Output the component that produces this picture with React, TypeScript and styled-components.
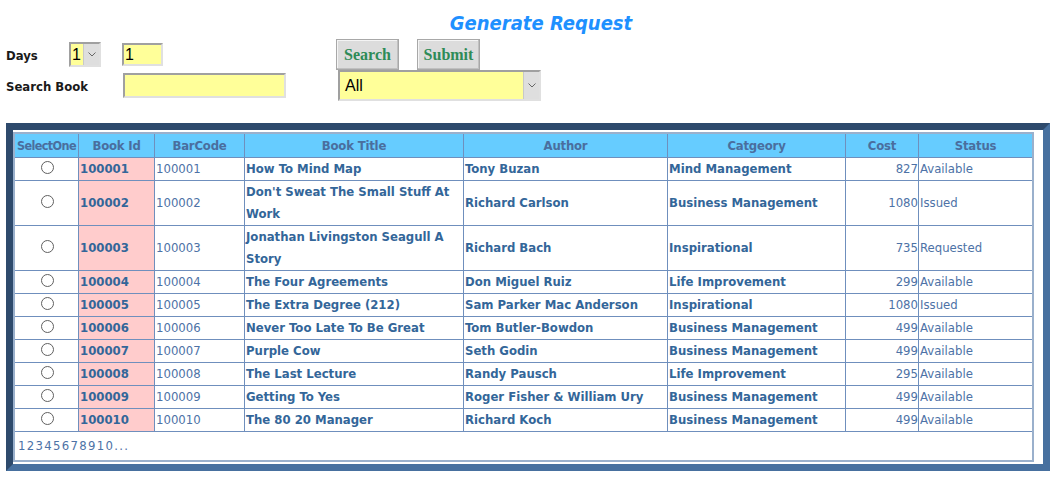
import React from "react";
import styled, { createGlobalStyle } from "styled-components";

const Global = createGlobalStyle`
  html, body { margin: 0; padding: 0; background: #fff; }
  body { font-family: "DejaVu Sans Condensed", "DejaVu Sans", sans-serif; }
`;

const Page = styled.div`
  width: 1053px;
  padding: 8px 3px 0 6px;
  box-sizing: border-box;
`;

const Title = styled.h1`
  margin: 0;
  height: 31px;
  font-size: 20px;
  font-style: italic;
  font-weight: bold;
  color: #1e90ff;
  text-align: center;
  padding-left: 26px;
  line-height: 31px;
`;

const FormRow = styled.div`
  display: flex;
  align-items: center;
  height: 31px;
`;

const Label = styled.div<{ $w: number }>`
  width: ${(p) => p.$w}px;
  font-size: 13px;
  font-weight: bold;
  color: #1a1a1a;
  padding-top: 2px;
`;

const YellowBox = styled.div<{ $w: number; $h: number; $ml?: number }>`
  width: ${(p) => p.$w}px;
  height: ${(p) => p.$h}px;
  margin-left: ${(p) => p.$ml ?? 0}px;
  box-sizing: border-box;
  background: #ffff99;
  border: 2px solid;
  border-color: #a0a0a0 #e0e0e0 #e0e0e0 #a0a0a0;
  font-family: "Liberation Sans", Arial, sans-serif;
  font-size: 16px;
  color: #000;
  line-height: 18px;
  padding-left: 1px;
  display: flex;
  align-items: center;
  justify-content: space-between;
`;

const Arrow = styled.span`
  width: 15px;
  align-self: stretch;
  background: #dedede;
  border-left: 1px solid #c8c8c8;
  display: flex;
  align-items: center;
  justify-content: center;
`;

const Button = styled.button<{ $ml: number }>`
  margin-left: ${(p) => p.$ml}px;
  width: 63px;
  height: 31px;
  background: #dcdcdc;
  border: 1px solid #a8a8a8;
  box-shadow: inset -1px -1px 0 #c0c0c0, inset 1px 1px 0 #f4f4f4;
  font-family: "Liberation Serif", "Times New Roman", serif;
  font-weight: bold;
  font-size: 16px;
  color: #2e8b57;
  padding: 0;
`;

const Frame = styled.div`
  margin-top: 22px;
  width: 1044px;
  box-sizing: border-box;
  border: 7px solid;
  border-color: #2e4a6c #47709f #47709f #2e4a6c;
  background: #fff;
  padding: 2px 9px 2px 0;
`;

const Grid = styled.table`
  border-collapse: collapse;
  width: 1019px;
  table-layout: fixed;
  border: 2px solid #9ab0cc;
  font-size: 13px;
  line-height: 22px;
`;

const Th = styled.th<{ $w: number; $tight?: boolean }>`
  width: ${(p) => p.$w}px;
  background: #66ccff;
  color: #4a6e9e;
  font-weight: bold;
  font-size: ${(p) => (p.$tight ? "12.5px" : "13px")};
  letter-spacing: ${(p) => (p.$tight ? "-0.6px" : "-0.2px")};
  border: 1px solid #6f8fbd;
  padding: 0;
  height: 23px;
  white-space: nowrap;
`;

const Td = styled.td<{ $kind?: "id" | "bold" | "plain" | "num" | "radio" }>`
  border: 1px solid #6f8fbd;
  padding: 0 0 0 1px;
  vertical-align: middle;
  color: ${(p) => (p.$kind === "plain" || p.$kind === "num" ? "#4d72a6" : "#336699")};
  font-weight: ${(p) => (p.$kind === "plain" || p.$kind === "num" ? "normal" : "bold")};
  background: ${(p) => (p.$kind === "id" ? "#ffcccc" : "#fff")};
  text-align: ${(p) => (p.$kind === "num" ? "right" : p.$kind === "radio" ? "center" : "left")};
`;

const Radio = styled.span`
  display: inline-block;
  width: 11px;
  height: 11px;
  border-radius: 50%;
  border: 1px solid #606060;
  background: #fff;
  vertical-align: -1px;
`;

const Pager = styled.td`
  border: 1px solid #6f8fbd;
  height: 28px;
  padding: 0 0 0 3px;
  color: #4d72a6;
  font-size: 13px;
  letter-spacing: 1.3px;
`;

const rows = [
  ["100001", "How To Mind Map", "Tony Buzan", "Mind Management", "827", "Available"],
  ["100002", "Don't Sweat The Small Stuff At Work", "Richard Carlson", "Business Management", "1080", "Issued"],
  ["100003", "Jonathan Livingston Seagull A Story", "Richard Bach", "Inspirational", "735", "Requested"],
  ["100004", "The Four Agreements", "Don Miguel Ruiz", "Life Improvement", "299", "Available"],
  ["100005", "The Extra Degree (212)", "Sam Parker Mac Anderson", "Inspirational", "1080", "Issued"],
  ["100006", "Never Too Late To Be Great", "Tom Butler-Bowdon", "Business Management", "499", "Available"],
  ["100007", "Purple Cow", "Seth Godin", "Business Management", "499", "Available"],
  ["100008", "The Last Lecture", "Randy Pausch", "Life Improvement", "295", "Available"],
  ["100009", "Getting To Yes", "Roger Fisher & William Ury", "Business Management", "499", "Available"],
  ["100010", "The 80 20 Manager", "Richard Koch", "Business Management", "499", "Available"],
];

const cols: [string, number][] = [
  ["SelectOne", 63],
  ["Book Id", 75],
  ["BarCode", 89],
  ["Book Title", 218],
  ["Author", 203],
  ["Catgeory", 177],
  ["Cost", 72],
  ["Status", 113],
];

const Chevron = () => (
  <svg width="8" height="5" viewBox="0 0 8 5">
    <path d="M0.5 0.5 L4 4 L7.5 0.5" fill="none" stroke="#666" strokeWidth="1" />
  </svg>
);

export default function App() {
  return (
    <Page>
      <Global />
      <Title>Generate Request</Title>
      <FormRow>
        <Label $w={63}>Days</Label>
        <YellowBox $w={32} $h={25}>
          1<Arrow><Chevron /></Arrow>
        </YellowBox>
        <YellowBox $w={41} $h={23} $ml={21}>1</YellowBox>
        <Button $ml={173}>Search</Button>
        <Button $ml={18}>Submit</Button>
      </FormRow>
      <FormRow>
        <Label $w={117}>Search Book</Label>
        <YellowBox $w={163} $h={25}></YellowBox>
        <YellowBox $w={203} $h={31} $ml={52}>
          <span style={{ paddingLeft: 4 }}>All</span>
          <Arrow><Chevron /></Arrow>
        </YellowBox>
      </FormRow>
      <Frame>
        <Grid>
          <thead>
            <tr>
              {cols.map(([c, w], i) => (
                <Th key={c} $w={w} $tight={i === 0}>{c}</Th>
              ))}
            </tr>
          </thead>
          <tbody>
            {rows.map((r) => (
              <tr key={r[0]}>
                <Td $kind="radio"><Radio /></Td>
                <Td $kind="id">{r[0]}</Td>
                <Td $kind="plain">{r[0]}</Td>
                <Td $kind="bold">{r[1]}</Td>
                <Td $kind="bold">{r[2]}</Td>
                <Td $kind="bold">{r[3]}</Td>
                <Td $kind="num">{r[4]}</Td>
                <Td $kind="plain">{r[5]}</Td>
              </tr>
            ))}
            <tr>
              <Pager colSpan={8}>12345678910...</Pager>
            </tr>
          </tbody>
        </Grid>
      </Frame>
    </Page>
  );
}
